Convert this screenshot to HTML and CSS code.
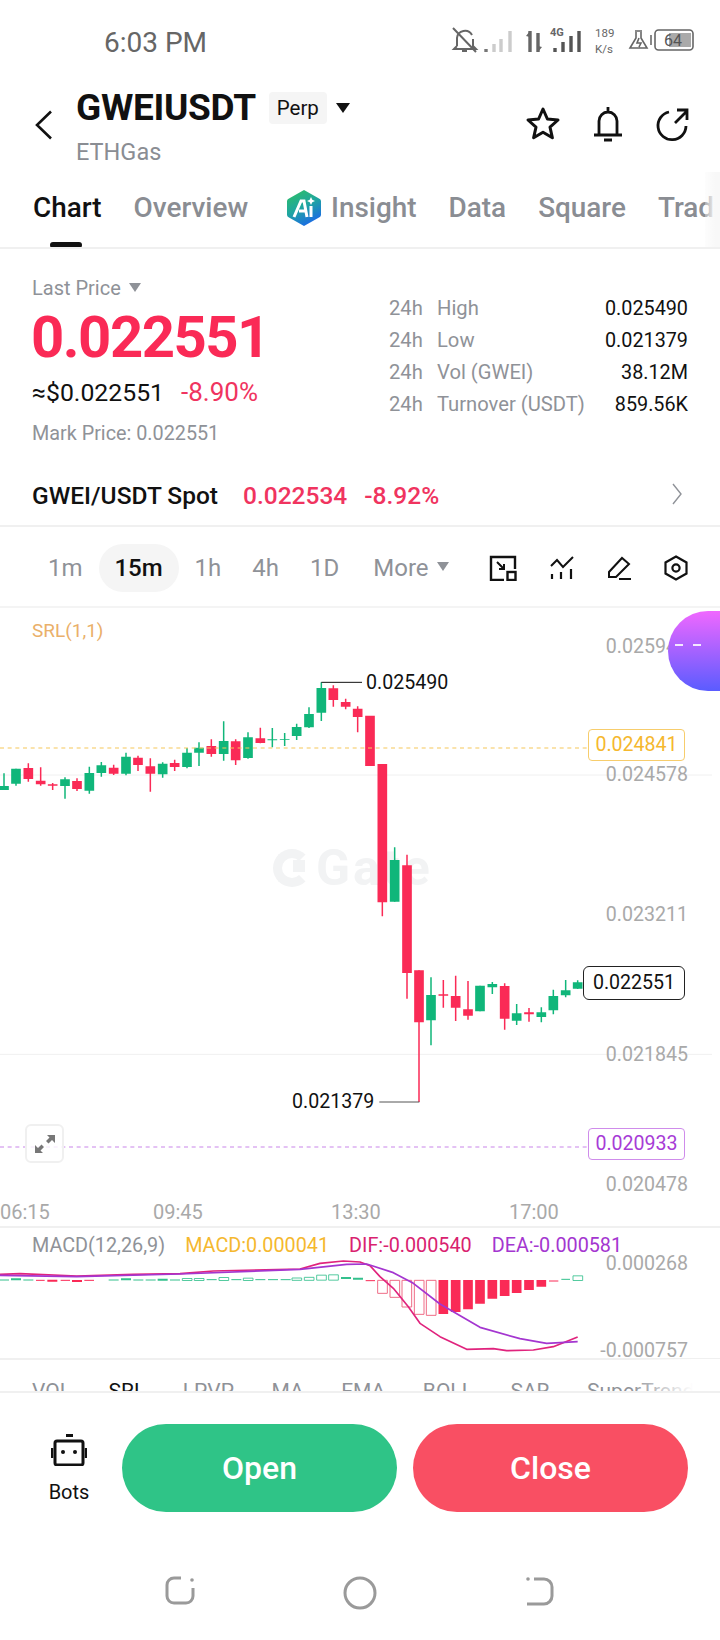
FILE: index.html
```html
<!DOCTYPE html>
<html lang="en">
<head>
<meta charset="utf-8">
<title>GWEIUSDT</title>
<link rel="stylesheet" href="styles.css">
</head>
<body>
<div class="page">
  <div class="status">
    <span class="time">6:03 PM</span>
    <svg class="status-icons" width="250" height="34" viewBox="450 24 250 34" fill="none">
      <g stroke="#666" stroke-width="2">
        <path d="M457 46V38a8 8 0 0 1 15-3M473 39v7l3 3H454l3-3M462 51h5M453 28l23 24"/>
      </g>
      <g stroke-width="3.4">
        <path d="M486 49v3" stroke="#777"/>
        <path d="M494 44v8M501 39v13M510 31v21" stroke="#ccc"/>
        <path d="M530 31v21M538 33v19" stroke="#666"/>
        <path d="M555 48v4M563 42v10M571 36v16M579 31v21" stroke="#555"/>
      </g>
      <path d="M526 36l4-5 0 6zM542 47l-4 5 0-6z" fill="#666"/>
      <text class="st-4g" x="550" y="36">4G</text>
      <text class="st-k" x="595" y="37">189</text>
      <text class="st-k" x="595" y="53">K/s</text>
      <path d="M635 31h7M636 32v6l-6 10h17l-6-10v-6M639 38l-2 5h4l-2 4" stroke="#666" stroke-width="1.6"/>
      <path d="M651 35v10" stroke="#888" stroke-width="2"/>
      <rect x="655" y="30" width="38" height="20" rx="3.5" stroke="#666" stroke-width="1.6"/>
      <rect x="669" y="33" width="22" height="14" fill="#aaa"/>
      <text class="st-bat" x="664" y="46">64</text>
    </svg>
  </div>

  <header class="head">
    <svg class="back" width="18" height="30" viewBox="0 0 18 30" fill="none"><path d="M16 1.500L2 15l14 13.500" stroke="#111" stroke-width="2.600"/></svg>
    <div class="head-titles">
      <div class="title-row">
        <h1 class="title">GWEIUSDT</h1>
        <span class="badge">Perp</span>
        <span class="tri"></span>
      </div>
      <div class="subtitle">ETHGas</div>
    </div>
    <div class="head-icons">
      <svg width="36" height="36" viewBox="0 0 36 36" fill="none"><path d="M18 3l4.400 10 10.600 1-8 7.200 2.400 10.600L18 26.300 8.600 31.800 11 21.200 3 14l10.600-1z" stroke="#111" stroke-width="3" stroke-linejoin="round"/></svg>
      <svg width="30" height="36" viewBox="0 0 30 36" fill="none"><path d="M15 1v4M6 29V15a9 9 0 0 1 18 0v14M1 29h28M11 34h8" stroke="#111" stroke-width="2.800"/></svg>
      <svg width="34" height="36" viewBox="0 0 34 36" fill="none"><path d="M14 6a14 14 0 1 0 17 14M20 17L32 5M22 4h10v10" stroke="#111" stroke-width="2.800"/></svg>
    </div>
  </header>

  <nav class="tabs">
    <span class="tab tab-on">Chart</span>
    <span class="tab">Overview</span>
    <span class="tab tab-ai">
      <svg width="34" height="36" viewBox="0 0 34 36">
        <defs><linearGradient id="aig" x1="0" y1="0" x2="0.500" y2="1"><stop offset="0" stop-color="#2fc25f"/><stop offset="0.550" stop-color="#1fa6a0"/><stop offset="1" stop-color="#1b6fe0"/></linearGradient></defs>
        <path d="M17 0l15 8.500a3 3 0 0 1 2 3v13a3 3 0 0 1-2 3L17 36 2 27.500a3 3 0 0 1-2-3v-13a3 3 0 0 1 2-3z" fill="url(#aig)"/>
        <path d="M7 27L14 11h3l3 16M12 21h7M24 16v11" stroke="#fff" stroke-width="3" fill="none"/>
        <path d="M24 7l1.300 2.700L28 11l-2.700 1.300L24 15l-1.300-2.700L20 11l2.700-1.300z" fill="#fff"/>
      </svg>
      Insight
    </span>
    <span class="tab">Data</span>
    <span class="tab">Square</span>
    <span class="tab">Trade</span>
  </nav>

  <section class="summary">
    <div class="price-col">
      <div class="last-price">Last Price <span class="tri tri-grey"></span></div>
      <div class="price">0.022551</div>
      <div class="approx"><span>≈$0.022551</span><span class="approx-pct">-8.90%</span></div>
      <div class="mark">Mark Price: 0.022551</div>
    </div>
    <div class="stats">
      <div class="stat"><span class="stat-h">24h</span><span class="stat-l">High</span><span class="stat-v">0.025490</span></div>
      <div class="stat"><span class="stat-h">24h</span><span class="stat-l">Low</span><span class="stat-v">0.021379</span></div>
      <div class="stat"><span class="stat-h">24h</span><span class="stat-l">Vol (GWEI)</span><span class="stat-v">38.12M</span></div>
      <div class="stat"><span class="stat-h">24h</span><span class="stat-l">Turnover (USDT)</span><span class="stat-v">859.56K</span></div>
    </div>
  </section>

  <div class="spot">
    <span class="spot-name">GWEI/USDT Spot</span>
    <span class="spot-price">0.022534</span>
    <span class="spot-pct">-8.92%</span>
    <svg class="spot-arrow" width="10" height="22" viewBox="0 0 10 22" fill="none"><path d="M1 1l8 10-8 10" stroke="#8f9298" stroke-width="1.400"/></svg>
  </div>

  <div class="periods">
    <span class="per per-1m">1m</span>
    <span class="per per-on">15m</span>
    <span class="per per-1h">1h</span>
    <span class="per per-4h">4h</span>
    <span class="per per-1d">1D</span>
    <span class="per per-more">More <span class="tri tri-grey tri-more"></span></span>
    <div class="per-icons">
      <svg width="28" height="26" viewBox="0 0 28 26" fill="none"><path d="M15 25H2V2h24v12" stroke="#111" stroke-width="2.400"/><path d="M8 7l7 7M15 9v5h-5" stroke="#111" stroke-width="2"/><rect x="18.500" y="17" width="8" height="8" stroke="#111" stroke-width="2.400"/></svg>
      <svg width="24" height="24" viewBox="0 0 24 24" fill="none"><path d="M1 10l6-6 6 7 10-10" stroke="#111" stroke-width="2"/><path d="M2 18v5M11 16v7M21 13v10" stroke="#111" stroke-width="2.200"/></svg>
      <svg width="24" height="24" viewBox="0 0 24 24" fill="none"><path d="M2 21v-5L15 2l7 6L9 21zM12 23h12" stroke="#111" stroke-width="2"/></svg>
      <svg width="24" height="26" viewBox="0 0 24 26" fill="none"><path d="M12 1.500l10.500 6v11L12 24.500 1.500 18.500v-11z" stroke="#111" stroke-width="2.200"/><circle cx="12" cy="13" r="3.600" stroke="#111" stroke-width="2.200"/></svg>
    </div>
  </div>

  <section class="chart">
    <div class="mark-wm"><span class="wm-logo"></span>Gate</div>
    <svg class="plot" width="720" height="620" viewBox="0 -9 2160 1860" fill="none">
      <path d="M0 495H2136M0 1333H2136" stroke="#f0f0f0" stroke-width="3"/>
      <path stroke="#10b67a" stroke-width="4.500" d="M12 490V540M48 476V527M195 502V566M268 470V551M304 456V500M378 428V496M488 457V503M561 414V475M597 397V468M671 334V452M744 367V446M817 354V412M854 369V408M890 341V390M927 292V354M964 217V333M1184 712V875M1293 1102V1306M1440 1127V1204M1477 1116V1152M1550 1182V1245M1624 1192V1237M1660 1139V1213M1697 1110V1162M1733 1111V1137"/>
      <path stroke="#10b67a" stroke-width="29" d="M12 528V540M48 476V521M195 508V528M268 489V542M304 466V489M378 440V491M488 461V493M561 428V471M597 413V428M671 393V432M744 382V444M817 388V391M854 388V390M890 351V378M927 312V352M964 234V308M1184 750V875M1293 1155V1231M1440 1127V1204M1477 1122V1132M1550 1210V1232M1624 1207V1221M1660 1158V1201M1697 1141V1156M1733 1117V1136"/>
      <path stroke="#fa2a56" stroke-width="4.500" d="M85 460V515M122 472V527M158 519V540M231 505V543M341 464V495M414 437V483M451 445V545M524 449V483M634 388V440M707 388V465M781 353V400M1000 226V290M1037 266V298M1073 289V367M1147 462V919M1221 734V1166M1257 1081V1476M1330 1110V1193M1367 1097V1233M1404 1113V1229M1514 1120V1259M1587 1194V1235"/>
      <path stroke="#fa2a56" stroke-width="29" d="M85 474V507M122 512V523M158 523V527M231 513V537M341 473V491M414 443V465M451 469V491M524 459V471M634 408V432M707 394V451M781 385V399M1000 235V270M1037 276V290M1073 296V321M1110 317V468M1147 462V877M1221 766V1089M1257 1081V1237M1330 1153V1157M1367 1158V1193M1404 1198V1217M1514 1128V1226M1587 1207V1213"/>
      <path d="M964 217H1086" stroke="#111" stroke-width="3"/>
      <path d="M1138 1476H1258" stroke="#555" stroke-width="3"/>
      <path d="M0 414H1764" stroke="#f6c75a" stroke-width="3.500" stroke-dasharray="12 11"/>
      <path d="M0 1611H1764" stroke="#c985ea" stroke-width="3.500" stroke-dasharray="12 11"/>
    </svg>
    <div class="srl">SRL(1,1)</div>
    <span class="axis ax-1">0.025944</span>
    <span class="axis ax-2">0.024578</span>
    <span class="axis ax-3">0.023211</span>
    <span class="axis ax-4">0.021845</span>
    <span class="axis ax-5">0.020478</span>
    <span class="hl hl-high">0.025490</span>
    <span class="hl hl-low">0.021379</span>
    <span class="tag tag-y">0.024841</span>
    <span class="tag tag-p">0.020933</span>
    <span class="tag tag-k">0.022551</span>
    <div class="float"><span class="float-d"></span><span class="float-d"></span></div>
    <div class="expand">
      <svg width="22" height="20" viewBox="0 0 22 20" fill="#777"><path d="M13 1h8v8l-3-3-3.500 3.500-2.500-2.500L15.500 3.500zM9 19H1v-8l3 3 3.500-3.500L10 13l-3.500 3.500z"/></svg>
    </div>
    <div class="times"><span class="tm tm-1">06:15</span><span class="tm tm-2">09:45</span><span class="tm tm-3">13:30</span><span class="tm tm-4">17:00</span></div>
  </section>

  <section class="macd">
    <svg class="plot" width="720" height="132" viewBox="0 441 2160 396" fill="none">
      <g stroke="#10b67a" stroke-width="3" opacity="0.85">
        <path d="M0 600H27M70 600H100M326 600H356M400 600H430M437 600H467M510 600H540M620 599H650M694 599H724M766 599H796M804 599H834M842 599H872" />
        <path d="M33 598H63M363 598H393M473 599H503M1023 594H1053M1059 596H1089" stroke-width="6"/>
        <path d="M547 595.500h29v6h-29zM583 595.500h29v6h-29zM657 592.500h29v9h-29zM730 594.500h29v7h-29zM876 594h29v7h-29zM913 592h29v9h-29zM950 585.500h29v15h-29zM986 584.500h29v16h-29zM1719 587.500h29v14h-29z" stroke-width="2.500"/>
        <path d="M1684 598H1710" stroke-width="3"/>
      </g>
      <g stroke="#fa2a56" stroke-width="3">
        <path d="M108 601H134M182 601H210M253 601H282M1097 602H1125M1647 603H1675"/>
        <path d="M142 602H172M216 603H246" stroke-width="6"/>
        <g stroke="#ef6d86" stroke-width="3">
          <path d="M1133 601h29v39h-29zM1170 601h29v51h-29zM1206 601h29v80h-29zM1243 601h29v102h-29zM1279 601h29v105h-29z"/>
        </g>
        <path stroke-width="29" d="M1330 600V702M1367 600V696M1404 600V688M1440 600V671M1477 600V656M1514 600V648M1550 600V639M1587 600V630M1624 600V620"/>
      </g>
      <path d="M0 583L60 581 230 588 400 583 540 581 640 573 900 567 960 550 1030 543 1080 546 1110 557 1140 590 1180 625 1225 680 1260 730 1320 770 1400 808 1480 806 1520 812 1600 810 1660 800 1733 771" stroke="#e0237d" stroke-width="5" stroke-linejoin="round"/>
      <path d="M0 586L230 590 540 582 900 568 1040 553 1100 552 1180 578 1240 610 1320 672 1440 742 1560 776 1640 790 1733 785" stroke="#a436d0" stroke-width="5" stroke-linejoin="round"/>
    </svg>
    <div class="legend">
      <span class="lg-name">MACD(12,26,9)</span>
      <span class="lg-m">MACD:0.000041</span>
      <span class="lg-d">DIF:-0.000540</span>
      <span class="lg-e">DEA:-0.000581</span>
    </div>
    <span class="axis ax-m1">0.000268</span>
    <span class="axis ax-m2">-0.000757</span>
  </section>

  <div class="indicators">
    <span class="ind">VOL</span>
    <span class="ind ind-on">SRL</span>
    <span class="ind">LPVP</span>
    <span class="ind">MA</span>
    <span class="ind">EMA</span>
    <span class="ind">BOLL</span>
    <span class="ind">SAR</span>
    <span class="ind">SuperTrend</span>
  </div>

  <div class="actions">
    <div class="bots">
      <svg width="36" height="32" viewBox="0 0 36 32" fill="none"><path d="M15 1.500h7" stroke="#111" stroke-width="3"/><rect x="4" y="7" width="28" height="24" rx="2" stroke="#111" stroke-width="3"/><path d="M1 14v10M35 14v10" stroke="#111" stroke-width="2.500"/><circle cx="12" cy="18" r="2" fill="#111"/><circle cx="24" cy="18" r="2" fill="#111"/></svg>
      <span class="bots-label">Bots</span>
    </div>
    <button class="btn btn-open">Open</button>
    <button class="btn btn-close">Close</button>
  </div>

  <div class="nav">
    <svg width="32" height="30" viewBox="0 0 32 30" fill="none"><path d="M17 2H10a7 7 0 0 0-7 7v11a7 7 0 0 0 7 7h12a7 7 0 0 0 7-7V12" stroke="#9a9a9a" stroke-width="3"/><circle cx="28" cy="4" r="1.800" fill="#9a9a9a"/></svg>
    <svg width="34" height="34" viewBox="0 0 34 34" fill="none"><circle cx="17" cy="17" r="15" stroke="#9a9a9a" stroke-width="3"/></svg>
    <svg width="30" height="30" viewBox="0 0 30 30" fill="none"><path d="M9 3h10a8 8 0 0 1 8 8v9a8 8 0 0 1-8 8H2" stroke="#9a9a9a" stroke-width="3"/><circle cx="3" cy="3" r="1.800" fill="#9a9a9a"/></svg>
  </div>
</div>
</body>
</html>
```
FILE: styles.css
```css
* { box-sizing: border-box; }
html, body { margin: 0; padding: 0; background: #fff; }
body { font-family: Roboto, "Liberation Sans", sans-serif; color: #111; }
.page { width: 720px; height: 1640px; overflow: hidden; position: relative; }

/* status bar */
.status { height: 82px; padding: 2px 0 0 104px; position: relative; display: flex; align-items: center; }
.time { font-size: 28px; color: #666; }
.status-icons { margin-left: auto; margin-right: 20px; margin-top: -2px; }
.st-4g { font: 700 11px Roboto, sans-serif; fill: #666; }
.st-k { font: 400 11.500px Roboto, sans-serif; fill: #666; }
.st-bat { font: 400 16px Roboto, sans-serif; fill: #555; }

/* header */
.head { height: 90px; display: flex; align-items: flex-start; padding: 10px 31px 0 35px; }
.back { margin: 18px 23px 0 0; flex: none; }
.head-titles { display: flex; flex-direction: column; }
.title-row { display: flex; align-items: center; height: 32px; }
.title { margin: 0; font-size: 37px; font-weight: 700; line-height: 32px; letter-spacing: -0.300px; }
.badge { margin-left: 13px; width: 58px; height: 32px; line-height: 32px; text-align: center; background: #f5f5f5; border-radius: 4px; font-size: 20.500px; }
.tri { display: inline-block; width: 0; height: 0; border-left: 7px solid transparent; border-right: 7px solid transparent; border-top: 10px solid #111; margin-left: 9px; }
.tri-grey { border-left-width: 6.500px; border-right-width: 6.500px; border-top: 9px solid #8f9298; margin-left: 3px; vertical-align: 3px; }
.tri-more { margin-left: 3px; vertical-align: 5px; }
.subtitle { margin-top: 15px; font-size: 23.500px; line-height: 26px; color: #8a8d93; }
.head-icons { margin-left: auto; display: flex; align-items: center; gap: 32px; margin-top: 14px; }

/* tabs */
.tabs { height: 77px; border-bottom: 2px solid #f0f0f0; display: flex; align-items: center; gap: 32px; padding: 0 0 4px 33px; position: relative; white-space: nowrap; overflow: hidden; }
.tab { font-size: 27.900px; font-weight: 500; color: #8a8d93; display: flex; align-items: center; }
.tab-on { color: #111; position: relative; }
.tab-on::after { content: ""; position: absolute; left: 17px; width: 32px; height: 6px; top: 51px; background: #111; border-radius: 3px; }
.tabs::after { content: ""; position: absolute; right: 0; top: 0; bottom: 0; width: 15px; background: linear-gradient(to right, rgba(248, 248, 248, .3), #f8f8f8 70%); }
.tab-ai { gap: 10px; margin-left: 7px; }

/* summary */
.summary { height: 216px; padding: 25px 32px 0; display: flex; justify-content: space-between; }
.last-price { height: 28px; line-height: 28px; font-size: 20px; color: #8f9298; }
.price { height: 68px; line-height: 70px; font-size: 58px; font-weight: 700; color: #fa2a56; letter-spacing: -1.500px; margin-left: -1px; }
.approx { height: 46px; line-height: 44px; font-size: 24.800px; display: flex; gap: 17px; align-items: baseline; }
.approx-pct { font-size: 26px; color: #f0345f; }
.mark { height: 35px; line-height: 35px; font-size: 19.800px; color: #8f9298; }
.stats { width: 299px; padding-top: 18px; font-size: 20.200px; }
.stat { height: 32px; display: flex; align-items: center; }
.stat-h { width: 48px; color: #8f9298; }
.stat-l { color: #8f9298; }
.stat-v { margin-left: auto; color: #111; font-size: 19.800px; }

/* spot */
.spot { height: 62px; border-bottom: 2px solid #f0f0f0; display: flex; align-items: center; padding: 1px 38px 0 32px; font-size: 24.500px; font-weight: 500; }
.spot-price { margin-left: 25px; color: #f0345f; }
.spot-pct { margin-left: 17px; color: #f0345f; }
.spot-arrow { margin-left: auto; margin-bottom: 4px; }

/* periods */
.periods { height: 81px; border-bottom: 2px solid #f4f4f4; display: flex; align-items: center; font-size: 24px; color: #8f9298; padding: 2px 0 0 48px; }
.per-on { margin-left: 16px; width: 80px; height: 48px; line-height: 48px; text-align: center; border-radius: 24px; background: #f5f5f5; color: #111; font-weight: 500; }
.per-1h { margin-left: 16px; }
.per-4h { margin-left: 31px; }
.per-1d { margin-left: 31px; }
.per-more { margin-left: 34px; }
.per-icons { margin-left: auto; display: flex; align-items: center; gap: 33px; padding-right: 32px; }

/* chart */
.chart { height: 621px; margin-top: -1px; position: relative; border-bottom: 2px solid #f0f0f0; }
.plot { display: block; position: absolute; left: 0; top: 0; }
.srl { position: absolute; left: 32px; top: 13px; font-size: 19px; line-height: 22px; color: #eab06a; }
.mark-wm { position: absolute; left: 273px; top: 237px; display: flex; align-items: center; gap: 5px; font-size: 50px; line-height: 48px; font-weight: 700; letter-spacing: 3px; color: #f2f3f4; }
.wm-logo { position: relative; width: 38px; height: 38px; border: 9px solid #f2f3f4; border-radius: 50%; border-right-color: transparent; }
.wm-logo::after { content: ""; position: absolute; left: 11px; top: 2px; width: 12px; height: 12px; background: #f2f3f4; }
.axis { position: absolute; right: 32px; font-size: 19.600px; line-height: 24px; color: #a9a9a9; }
.ax-1 { top: 28px; }
.ax-2 { top: 156px; }
.ax-3 { top: 296px; }
.ax-4 { top: 436px; }
.ax-5 { top: 566px; }
.hl { position: absolute; font-size: 19.600px; line-height: 24px; color: #111; }
.hl-high { left: 366px; top: 64px; }
.hl-low { left: 292px; top: 483px; }
.tag { position: absolute; left: 588px; width: 97px; height: 32px; line-height: 29px; border-radius: 4px; font-size: 19.600px; text-align: center; background: #fff; border: 1.500px solid; }
.tag-y { top: 122px; color: #f5b82e; border-color: #f7cd6c; }
.tag-p { top: 521px; color: #a73cd6; border-color: #cf8ceb; }
.tag-k { left: 583px; width: 102px; top: 359px; height: 34px; line-height: 31px; color: #111; border-color: #222; border-radius: 6px; }
.float { position: absolute; right: 0; top: 4px; width: 52px; height: 80px; border-radius: 40px 0 0 40px; background: linear-gradient(#f068ff, #5a5cff); display: flex; gap: 10px; padding: 33px 0 0 7px; }
.float-d { width: 8px; height: 2px; background: rgba(255, 255, 255, .85); }
.expand { position: absolute; left: 25px; top: 517px; width: 39px; height: 39px; background: rgba(255, 255, 255, .8); border: 2px solid #f0f0f0; border-radius: 6px; display: flex; align-items: center; justify-content: center; }
.times { position: absolute; left: 0; right: 0; bottom: 2px; height: 24px; }
.tm { position: absolute; top: 0; font-size: 20px; line-height: 24px; color: #a9a9a9; }
.tm-1 { left: 0; }
.tm-2 { left: 153px; }
.tm-3 { left: 331px; }
.tm-4 { left: 509px; }

/* macd */
.macd { height: 133px; margin-top: -1px; position: relative; border-bottom: 2px solid #f0f0f0; }
.legend { position: absolute; left: 32px; top: 7px; font-size: 19.800px; line-height: 24px; display: flex; gap: 20px; white-space: nowrap; }
.lg-name { color: #8f9298; }
.lg-m { color: #f5b82e; }
.lg-d { color: #d9226f; }
.lg-e { color: #a436d0; }
.ax-m1 { top: 25px; }
.ax-m2 { top: 112px; }

/* indicator tabs */
.indicators { height: 34px; margin-top: -1px; border-bottom: 2px solid #f0f0f0; overflow: hidden; padding: 20px 0 0 32px; display: flex; gap: 37.500px; font-size: 21px; line-height: 24px; color: #8f9298; white-space: nowrap; position: relative; }
.ind-on { color: #111; }
.indicators::after { content: ""; position: absolute; right: 0; top: 0; bottom: 0; width: 90px; background: linear-gradient(to right, rgba(255, 255, 255, 0), #fff 70%); }

/* actions */
.actions { height: 147px; display: flex; align-items: flex-start; gap: 16px; padding: 31px 32px 0; }
.bots { width: 74px; flex: none; display: flex; flex-direction: column; align-items: center; padding-top: 10px; }
.bots-label { margin-top: 14px; font-size: 20px; line-height: 24px; color: #111; }
.btn { flex: 1; height: 88px; border: 0; border-radius: 44px; color: #fff; font: 500 32px Roboto, sans-serif; }
.btn-open { background: #2fc487; }
.btn-close { background: #f94f63; }

/* nav */
.nav { height: 100px; display: grid; grid-template-columns: repeat(3, 180px); padding: 36px 90px 0; justify-items: center; align-items: start; }
```
